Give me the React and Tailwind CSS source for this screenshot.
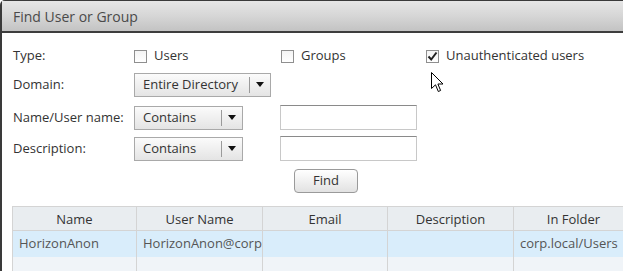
import React from "react";

function Checkbox({ checked = false }) {
  return (
    <span className="flex h-[13px] w-[13px] items-center justify-center border border-[#8f8f8f] bg-gradient-to-b from-[#f4f4f4] to-white">
      {checked && (
        <svg width="11" height="11" viewBox="0 0 11 11">
          <path d="M1.5 5.5 L4.2 8.5 L9.5 1.5" fill="none" stroke="#222" strokeWidth="2" />
        </svg>
      )}
    </span>
  );
}

function Dropdown({ label, width }) {
  return (
    <div
      className={`flex h-[24px] items-center border border-[#a9a9a9] bg-gradient-to-b from-[#fbfbfb] to-[#e4e4e4] ${width}`}
    >
      <span className="flex-1 whitespace-nowrap pl-[8px] text-[#333]">{label}</span>
      <span className="h-[16px] w-px bg-[#9a9a9a]" />
      <span className="flex w-[20px] items-center justify-center">
        <svg width="8" height="5" viewBox="0 0 8 5">
          <path d="M0 0 H8 L4 5 Z" fill="#111" />
        </svg>
      </span>
    </div>
  );
}

function TextBox() {
  return <div className="h-[25px] w-[137px] border border-[#c8c8c8] border-t-[#8a8a8a] bg-white" />;
}

const columns = [
  { title: "Name", width: "w-[125px]" },
  { title: "User Name", width: "w-[126px]" },
  { title: "Email", width: "w-[125px]" },
  { title: "Description", width: "w-[126px]" },
  { title: "In Folder", width: "w-[120px]" },
];

const row = ["HorizonAnon", "HorizonAnon@corp.local", "", "", "corp.local/Users"];

export default function App() {
  return (
    <div className="relative h-[271px] w-[623px] overflow-hidden bg-white font-['Open_Sans',Arial,sans-serif] text-[13px]">
      <div className="h-full rounded-tl-[5px] border-l-2 border-t border-[#3a3a3a]">
        <div className="flex h-[32px] items-center border-b-2 border-[#3d3d3d] bg-gradient-to-b from-[#e6e6e6] via-[#d6d6d6] to-[#c3c3c3] pl-[11px] text-[14px] text-[#4a4a4a]">
          Find User or Group
        </div>

        <div className="pl-[11px] text-[#333]">
          <div className="mt-[16px] flex h-[14px] items-center">
            <span className="w-[121px]">Type:</span>
            <label className="flex w-[147px] items-center gap-[7px]">
              <Checkbox />
              <span>Users</span>
            </label>
            <label className="flex w-[145px] items-center gap-[7px]">
              <Checkbox />
              <span>Groups</span>
            </label>
            <label className="flex items-center gap-[7px]">
              <Checkbox checked />
              <span>Unauthenticated users</span>
            </label>
          </div>

          <div className="mt-[9px] flex h-[25px] items-center">
            <span className="w-[121px]">Domain:</span>
            <Dropdown label="Entire Directory" width="w-[137px]" />
          </div>

          <div className="mt-[8px] flex h-[25px] items-center">
            <span className="w-[121px] whitespace-nowrap">Name/User name:</span>
            <Dropdown label="Contains" width="w-[109px]" />
            <span className="ml-[37px]">
              <TextBox />
            </span>
          </div>

          <div className="mt-[6px] flex h-[25px] items-center">
            <span className="w-[121px]">Description:</span>
            <Dropdown label="Contains" width="w-[109px]" />
            <span className="ml-[37px]">
              <TextBox />
            </span>
          </div>

          <div className="mt-[8px] flex pl-[281px]">
            <button className="h-[24px] w-[64px] rounded-[4px] border border-[#9a9a9a] bg-gradient-to-b from-white to-[#e2e2e2] text-[#333]">
              Find
            </button>
          </div>
        </div>

        <div className="ml-[10px] mt-[13px]">
          <div className="flex h-[25px] border-y border-[#d4d4d4] bg-[#e9edf0] text-[#333]">
            {columns.map((c, i) => (
              <div
                key={c.title}
                className={`flex shrink-0 items-center justify-center pt-[2px] ${c.width} ${i === 0 ? "border-l" : ""} border-r border-[#d4d4d4]`}
              >
                {c.title}
              </div>
            ))}
          </div>
          <div className="flex h-[26px] bg-[#d9edfb] text-[#555]">
            {columns.map((c, i) => (
              <div
                key={c.title}
                className={`flex shrink-0 items-center overflow-hidden whitespace-nowrap pl-[6px] ${c.width} ${i === 0 ? "border-l" : ""} border-r border-[#d4d4d4]`}
              >
                {row[i]}
              </div>
            ))}
          </div>
          <div className="flex h-[20px] bg-[#f0f4f8]">
            {columns.map((c, i) => (
              <div
                key={c.title}
                className={`shrink-0 ${c.width} ${i === 0 ? "border-l" : ""} border-r border-[#d4d4d4]`}
              />
            ))}
          </div>
        </div>
      </div>

      <svg className="absolute left-[431px] top-[72px]" width="13" height="21" viewBox="0 0 13 21">
        <path
          d="M0.5 0.5 L0.5 16.5 L4.5 12.8 L7.3 19.5 L9.6 18.5 L6.9 12 L12 12 Z"
          fill="#fff"
          stroke="#000"
          strokeWidth="1"
          strokeLinejoin="round"
        />
      </svg>
    </div>
  );
}
